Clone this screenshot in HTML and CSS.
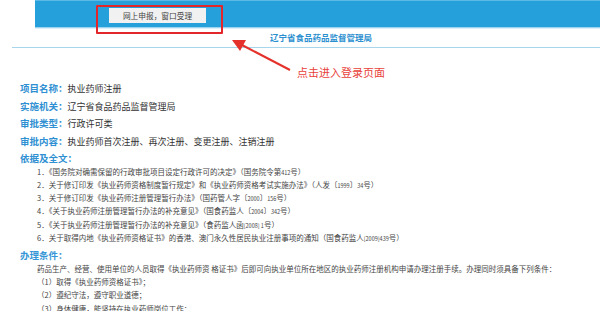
FILE: index.html
```html
<!DOCTYPE html>
<html lang="zh-CN">
<head>
<meta charset="utf-8">
<link rel="stylesheet" href="styles.css">
</head>
<body>
<div class="page">
  <header class="header">
    <div class="topbar">
      <div class="btn">网上申报，窗口受理</div>
    </div>
    <div class="subtitle">辽宁省食品药品监督管理局</div>
  </header>

  <div class="annot-box"></div>
  <svg class="annot-arrow" width="70" height="40" viewBox="0 0 70 40">
    <line x1="62" y1="33" x2="14" y2="8" stroke="#e4312b" stroke-width="2"/>
    <polygon points="4,3 18,3 12,14" fill="#e4312b"/>
  </svg>
  <div class="annot-text">点击进入登录页面</div>

  <main class="content">
    <div class="row"><span class="label">项目名称：</span><span class="value">执业药师注册</span></div>
    <div class="row"><span class="label">实施机关：</span><span class="value">辽宁省食品药品监督管理局</span></div>
    <div class="row"><span class="label">审批类型：</span><span class="value">行政许可类</span></div>
    <div class="row"><span class="label">审批内容：</span><span class="value">执业药师首次注册、再次注册、变更注册、注销注册</span></div>
    <div class="row"><span class="label">依据及全文：</span></div>
    <ol class="refs">
      <li>1．《国务院对确需保留的行政审批项目设定行政许可的决定》（国务院令第<span class="num">412</span>号）</li>
      <li>2．关于修订印发《执业药师资格制度暂行规定》和《执业药师资格考试实施办法》（人发〔<span class="num">1999</span>〕<span class="num">34</span>号）</li>
      <li>3．关于修订印发《执业药师注册管理暂行办法》（国药管人字〔<span class="num">2000</span>〕<span class="num">156</span>号）</li>
      <li>4．《关于执业药师注册管理暂行办法的补充意见》（国食药监人〔<span class="num">2004</span>〕<span class="num">342</span>号）</li>
      <li>5．《关于执业药师注册管理暂行办法的补充意见》（食药监人函<span class="num">[2008] 1</span>号）</li>
      <li>6．关于取得内地《执业药师资格证书》的香港、澳门永久性居民执业注册事项的通知（国食药监人<span class="num">[2009]439</span>号）</li>
    </ol>
    <div class="row"><span class="label label-light">办理条件：</span></div>
    <div class="cond">
      <p>药品生产、经营、使用单位的人员取得《执业药师资 格证书》后即可向执业单位所在地区的执业药师注册机构申请办理注册手续。办理同时须具备下列条件：</p>
      <p>（1）取得《执业药师资格证书》；</p>
      <p>（2）遵纪守法，遵守职业道德；</p>
      <p>（3）身体健康，能坚持在执业药师岗位工作；</p>
    </div>
  </main>
</div>
</body>
</html>
```

FILE: styles.css
```css
html, body {
  margin: 0;
  padding: 0;
  background: #fff;
}

body {
  font-family: "Noto Sans CJK SC", "Microsoft YaHei", sans-serif;
  color: #333;
  width: 600px;
  height: 311px;
  overflow: hidden;
}

.page {
  position: relative;
  width: 600px;
  height: 311px;
  overflow: hidden;
}

.topbar {
  margin-left: 35px;
  height: 27px;
  box-sizing: border-box;
  padding: 8px 0 0 74px;
  background: #26a0da;
  border-top: 1px solid #5cb9e6;
  box-shadow: 0 1px 0 #9ed3ef, 0 2px 0 #dcf0fa;
}

.btn {
  width: 97px;
  height: 15px;
  margin-top: -1px;
  background: #f1f1f1;
  color: #444;
  font-size: 7.7px;
  line-height: 15px;
  text-align: center;
}

.subtitle {
  margin-left: 12px;
  height: 20px;
  padding-left: 258px;
  line-height: 21px;
  font-size: 8.5px;
  font-weight: bold;
  color: #2c8fd0;
  border-bottom: 1.5px solid #a6d5ec;
}

.annot-box {
  position: absolute;
  left: 96px;
  top: 5px;
  width: 123px;
  height: 25px;
  border: 2px solid #e3262a;
  border-radius: 1px;
}

.annot-arrow {
  position: absolute;
  left: 228px;
  top: 37px;
}

.annot-text {
  position: absolute;
  left: 297px;
  top: 64px;
  font-size: 11px;
  line-height: 16px;
  color: #e8413a;
}

.content {
  margin-top: 29px;
  padding-left: 20px;
}

.row {
  height: 17.5px;
  line-height: 17.5px;
  white-space: nowrap;
}

.label {
  font-size: 9.5px;
  font-weight: bold;
  color: #2e8fd2;
}

.label-light {
  font-weight: bold;
  color: #3595d6;
}

.value {
  font-size: 9px;
  color: #333;
}

.refs {
  list-style: none;
  margin: 0;
  padding: 0 0 0 17px;
}

.refs li {
  font-size: 7.5px;
  line-height: 13.3px;
  height: 13.3px;
  color: #444;
  white-space: nowrap;
}

.num {
  font-size: 5.5px;
}

.cond {
  padding-left: 17px;
}

.cond p {
  margin: 0;
  font-size: 7.5px;
  line-height: 13.3px;
  height: 13.3px;
  color: #444;
  white-space: nowrap;
}
```
